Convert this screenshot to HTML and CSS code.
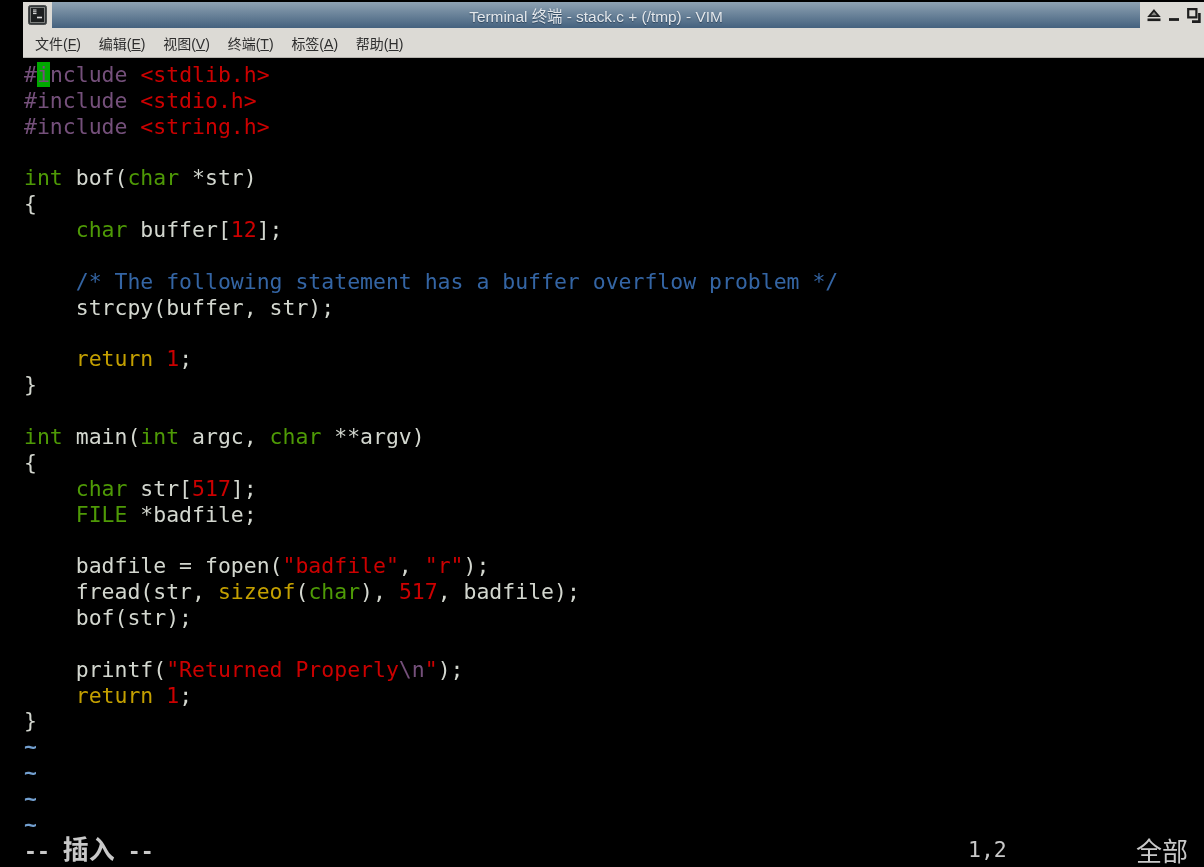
FILE: index.html
```html
<!DOCTYPE html>
<html lang="zh">
<head>
<meta charset="utf-8">
<title>Terminal 终端 - stack.c + (/tmp) - VIM</title>
<link rel="stylesheet" href="styles.css">
</head>
<body>
<div class="window">
  <header class="titlebar">
    <div class="app-btn">
      <svg width="19" height="20" viewBox="0 0 19 20"><rect x="0.5" y="0.5" width="18" height="19" rx="2" fill="#34383a" stroke="#4a4c4c"/><rect x="2.5" y="2.5" width="14" height="15" fill="#1d1f20" stroke="#7d7f7d"/><path d="M5 5h3.5M5 6.8h3.5M5 8.6h3.5" stroke="#e8e8e8" stroke-width="1"/><path d="M9 12.5h5" stroke="#e0e0e0" stroke-width="1.6"/></svg>
    </div>
    <div class="title">Terminal 终端 - stack.c + (/tmp) - VIM</div>
    <div class="win-btns">
      <svg width="14" height="13" viewBox="0 0 14 13"><path d="M7 1.5 11.8 7.2H2.2Z" fill="#8a8a86" stroke="#1e1e1e" stroke-width="1.8"/><path d="M0.5 10.8h13" stroke="#1e1e1e" stroke-width="2.6"/></svg>
      <svg width="10" height="13" viewBox="0 0 10 13"><path d="M0 10.5h10" stroke="#1e1e1e" stroke-width="2.8"/></svg>
      <svg width="14" height="15" viewBox="0 0 14 15"><path d="M1.2 1.2h8.2v8.2H1.2Z" fill="none" stroke="#1e1e1e" stroke-width="2.2"/><path d="M12.4 5v8.6H5" fill="none" stroke="#1e1e1e" stroke-width="2.6"/></svg>
    </div>
  </header>
  <nav class="menubar">
    <span>文件(<u>F</u>)</span>
    <span>编辑(<u>E</u>)</span>
    <span>视图(<u>V</u>)</span>
    <span>终端(<u>T</u>)</span>
    <span>标签(<u>A</u>)</span>
    <span>帮助(<u>H</u>)</span>
  </nav>
</div>
<main class="vim">
<div class="code">
<div class="ln"><span class="pp">#<span class="cursor">i</span>nclude</span> <span class="str">&lt;stdlib.h&gt;</span></div>
<div class="ln"><span class="pp">#include</span> <span class="str">&lt;stdio.h&gt;</span></div>
<div class="ln"><span class="pp">#include</span> <span class="str">&lt;string.h&gt;</span></div>
<div class="ln"></div>
<div class="ln"><span class="ty">int</span> bof(<span class="ty">char</span> *str)</div>
<div class="ln">{</div>
<div class="ln">    <span class="ty">char</span> buffer[<span class="str">12</span>];</div>
<div class="ln"></div>
<div class="ln">    <span class="com">/* The following statement has a buffer overflow problem */</span></div>
<div class="ln">    strcpy(buffer, str);</div>
<div class="ln"></div>
<div class="ln">    <span class="kw">return</span> <span class="str">1</span>;</div>
<div class="ln">}</div>
<div class="ln"></div>
<div class="ln"><span class="ty">int</span> main(<span class="ty">int</span> argc, <span class="ty">char</span> **argv)</div>
<div class="ln">{</div>
<div class="ln">    <span class="ty">char</span> str[<span class="str">517</span>];</div>
<div class="ln">    <span class="ty">FILE</span> *badfile;</div>
<div class="ln"></div>
<div class="ln">    badfile = fopen(<span class="str">"badfile"</span>, <span class="str">"r"</span>);</div>
<div class="ln">    fread(str, <span class="kw">sizeof</span>(<span class="ty">char</span>), <span class="str">517</span>, badfile);</div>
<div class="ln">    bof(str);</div>
<div class="ln"></div>
<div class="ln">    printf(<span class="str">"Returned Properly</span><span class="pp">\n</span><span class="str">"</span>);</div>
<div class="ln">    <span class="kw">return</span> <span class="str">1</span>;</div>
<div class="ln">}</div>
<div class="ln tilde">~</div>
<div class="ln tilde">~</div>
<div class="ln tilde">~</div>
<div class="ln tilde">~</div>
</div>
<footer class="status">
  <span class="mode">-- <span class="cjk">插入</span> --</span>
  <span class="ruler">1,2</span>
  <span class="cjk">全部</span>
</footer>
</main>
</body>
</html>
```
FILE: styles.css
```css
html, body { margin: 0; padding: 0; background: #000; }
body { width: 1204px; height: 867px; overflow: hidden; display: flex; flex-direction: column; }
.window { margin: 2px 0 0 23px; font-family: "Liberation Sans", "Noto Sans CJK SC", sans-serif; filter: blur(0.35px); }
.titlebar { height: 26px; display: flex; align-items: stretch; background: linear-gradient(#8ea2b3, #44617e); }
.app-btn { width: 29px; background: #dcdad5; display: flex; align-items: center; justify-content: center; box-sizing: border-box; }
.title { flex: 1; display: flex; align-items: center; justify-content: center; color: #e4e8ec; font-size: 15.4px; text-shadow: 0 1px 1px #2c435a; }
.win-btns { width: 64px; background: #dcdad5; display: flex; align-items: center; gap: 8px; padding-left: 7px; box-sizing: border-box; }
.menubar { height: 30px; box-sizing: border-box; background: #dcdad5; border-bottom: 1px solid #b5b3ae; display: flex; align-items: center; gap: 17.8px; padding-left: 12px; font-size: 14px; color: #2e2e2e; }
.vim { flex: 1; display: flex; flex-direction: column; font-family: "DejaVu Sans Mono", "Noto Sans CJK SC", monospace; filter: blur(0.45px); color: #d3d7cf; font-size: 21.48px; }
.code { margin-top: 4px; padding-left: 24px; }
.ln { height: 25.87px; line-height: 25.87px; white-space: pre; }
.pp { color: #75507b; }
.str { color: #cc0000; }
.ty { color: #4e9a06; }
.kw { color: #c4a000; }
.com { color: #3465a4; }
.tilde { color: #729fcf; font-weight: bold; }
.cursor { background: #00a800; color: #75507b; }
.status { display: flex; align-items: center; height: 24px; padding-left: 24px; color: #c8c8c8; }
.mode { width: 944px; font-weight: bold; }
.ruler { width: 168px; }
.cjk { font-size: 26px; line-height: 26px; font-family: "Noto Sans CJK SC", sans-serif; }
```
